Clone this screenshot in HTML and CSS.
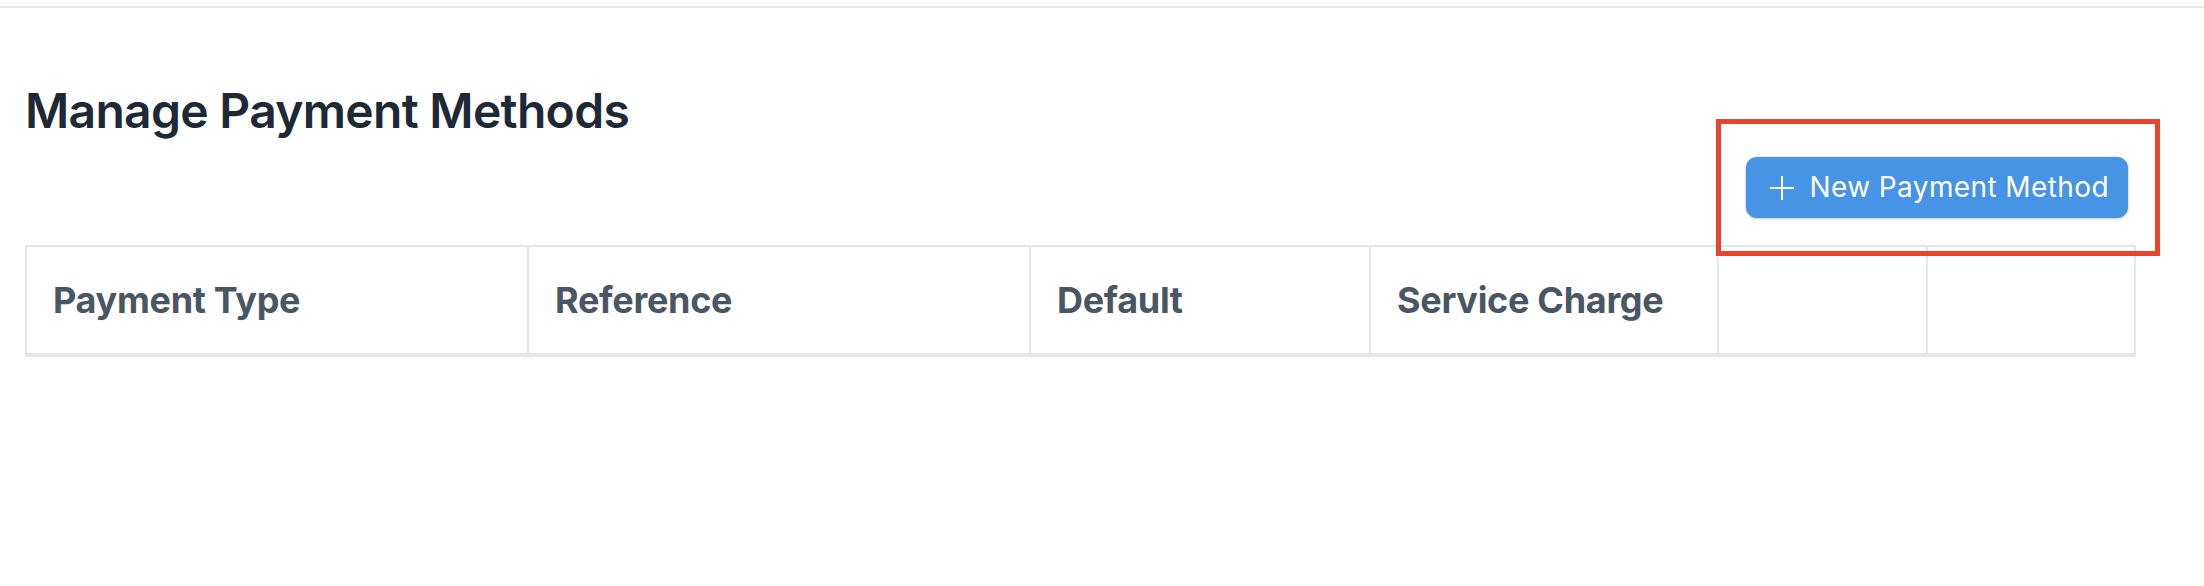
FILE: index.html
```html
<!DOCTYPE html>
<html lang="en">
<head>
<meta charset="utf-8">
<title>Manage Payment Methods</title>
<link rel="stylesheet" href="styles.css">
</head>
<body>
<div class="topbar"></div>
<main class="page">
  <h1 class="title">Manage Payment Methods</h1>
  <div class="actions">
    <button class="btn-primary" type="button">
      <svg class="btn-icon" viewBox="0 0 24 24" width="24" height="24" aria-hidden="true">
        <path d="M12 0V24M0 12H24" stroke="#ffffff" stroke-width="2" fill="none"/>
      </svg>
      <span>New Payment Method</span>
    </button>
  </div>
  <table class="methods">
    <thead>
      <tr>
        <th class="c1">Payment Type</th>
        <th class="c2">Reference</th>
        <th class="c3">Default</th>
        <th class="c4">Service Charge</th>
        <th class="c5"></th>
        <th class="c6"></th>
      </tr>
    </thead>
    <tbody></tbody>
  </table>
</main>
<div class="highlight"></div>
</body>
</html>
```

FILE: styles.css
```css
* { box-sizing: border-box; }

html, body {
  margin: 0;
  padding: 0;
  background: #ffffff;
}

body {
  position: relative;
  font-family: Inter, "Noto Sans", "Liberation Sans", sans-serif;
  width: 2204px;
  height: 586px;
  overflow: hidden;
}

.topbar {
  height: 8px;
  border-bottom: 2px solid #e4e8ec;
}

.page {
  padding: 74px 68px 0 25px;
}

.title {
  margin: 0;
  font-size: 48px;
  line-height: 58px;
  font-weight: 600;
  letter-spacing: -0.7px;
  color: #1f2935;
}

.actions {
  display: flex;
  justify-content: flex-end;
  margin-top: 17px;
  padding-right: 8px;
}

.btn-primary {
  display: inline-flex;
  align-items: center;
  height: 61px;
  padding: 0 19px 0 24px;
  border: none;
  border-radius: 11px;
  background: #4793e6;
  color: #ffffff;
  font-family: inherit;
  font-size: 28px;
  font-weight: 400;
  line-height: 33px;
  letter-spacing: 0.4px;
  box-shadow: 0 0 0 1px rgba(0, 0, 0, 0.06), 0 1px 3px rgba(0, 0, 0, 0.14);
  cursor: pointer;
}

.btn-icon {
  flex: none;
  margin-right: 15px;
}

.methods {
  margin-top: 27px;
  width: 100%;
  table-layout: fixed;
  border-collapse: separate;
  border-spacing: 0;
}

.methods th {
  text-align: left;
  font-size: 36px;
  line-height: 44px;
  font-weight: 700;
  letter-spacing: -0.3px;
  color: #4b5662;
  padding: 31px 24px 31px 26px;
  border-top: 2px solid #e3e6ea;
  border-right: 2px solid #e3e6ea;
  border-bottom: 4px solid #e3e6ea;
  white-space: nowrap;
}

.methods th.c1 { border-left: 2px solid #e3e6ea; width: 504px; }
.methods th.c2 { width: 502px; }
.methods th.c3 { width: 340px; }
.methods th.c4 { width: 348px; }
.methods th.c5 { width: 209px; }

.highlight {
  position: absolute;
  left: 1716px;
  top: 119px;
  width: 444px;
  height: 137px;
  border: 5px solid #e9442d;
  pointer-events: none;
}
```
